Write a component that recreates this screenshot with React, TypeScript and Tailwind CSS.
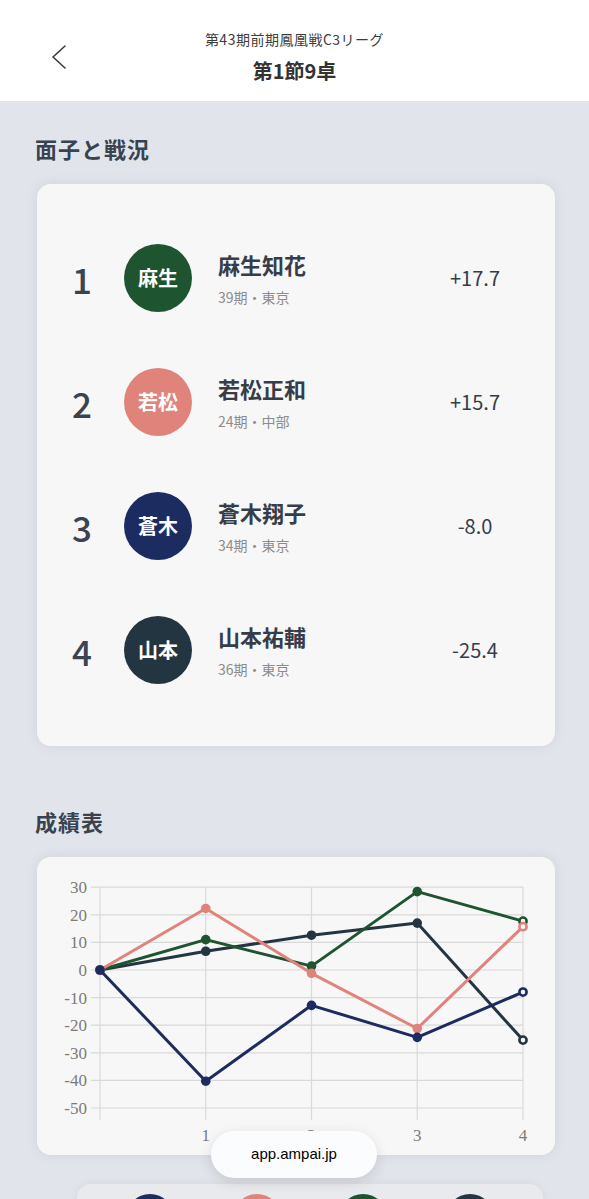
import React from "react";

const players = [
  { rank: 1, short: "麻生", name: "麻生知花", sub: "39期・東京", score: "+17.7", color: "bg-[#1f5430]" },
  { rank: 2, short: "若松", name: "若松正和", sub: "24期・中部", score: "+15.7", color: "bg-[#e0847b]" },
  { rank: 3, short: "蒼木", name: "蒼木翔子", sub: "34期・東京", score: "-8.0", color: "bg-[#1d2c60]" },
  { rank: 4, short: "山本", name: "山本祐輔", sub: "36期・東京", score: "-25.4", color: "bg-[#243542]" },
];

const series = [
  { color: "#243542", data: [0, 6.8, 12.6, 17, -25.4] },
  { color: "#1f5430", data: [0, 11, 1.4, 28.4, 17.7] },
  { color: "#e0847b", data: [0, 22.3, -1.2, -21.2, 15.7] },
  { color: "#1d2c60", data: [0, -40.3, -12.8, -24.4, -8.0] },
];

const X0 = 63;
const DX = 105.75;
const Y0 = 113;
const KY = 2.76;
const xp = (i: number) => X0 + i * DX;
const yp = (v: number) => Y0 - v * KY;

const serif = { fontFamily: "'Liberation Serif', 'Times New Roman', serif" };

function Chart() {
  const ticks = [30, 20, 10, 0, -10, -20, -30, -40, -50];
  return (
    <svg width="518" height="298" viewBox="0 0 518 298" className="block" style={serif}>
      {ticks.map((t) => (
        <line key={"h" + t} x1={54} x2={486} y1={yp(t)} y2={yp(t)} stroke="#d9d9d9" strokeWidth={1.2} />
      ))}
      {[0, 1, 2, 3, 4].map((i) => (
        <line key={"v" + i} x1={xp(i)} x2={xp(i)} y1={yp(30)} y2={263} stroke="#d9d9d9" strokeWidth={1.2} />
      ))}
      {ticks.map((t) => (
        <text key={"l" + t} x={50} y={yp(t) + 6} textAnchor="end" fontSize={17} fill="#7b7b7b" style={serif}>
          {t}
        </text>
      ))}
      {[1, 2, 3, 4].map((i) => (
        <text key={"x" + i} x={xp(i)} y={284} textAnchor="middle" fontSize={17} fill="#7b7b7b" style={serif}>
          {i}
        </text>
      ))}
      {series.map((s, si) => (
        <g key={si}>
          <polyline
            points={s.data.map((v, i) => `${xp(i)},${yp(v)}`).join(" ")}
            fill="none"
            stroke={s.color}
            strokeWidth={3}
            strokeLinejoin="round"
          />
          {s.data.map((v, i) =>
            i === 4 ? (
              <circle key={i} cx={xp(i)} cy={yp(v)} r={3.6} fill="#f7f7f7" stroke={s.color} strokeWidth={2.6} />
            ) : (
              <circle key={i} cx={xp(i)} cy={yp(v)} r={4.8} fill={s.color} />
            )
          )}
        </g>
      ))}
    </svg>
  );
}

export default function App() {
  return (
    <div
      className="relative h-[1199px] w-[589px] overflow-hidden bg-[#e1e5eb] text-[#363d49]"
      style={{ fontFamily: "'Noto Sans CJK JP', 'Noto Sans', sans-serif" }}
    >
      {/* header */}
      <div className="relative flex h-[101px] flex-col items-center bg-white pt-[28px]">
        <svg className="absolute left-[50px] top-[44px]" width="18" height="26" viewBox="0 0 18 26">
          <path d="M15 2 L3 13 L15 24" fill="none" stroke="#3a3a3a" strokeWidth="1.6" strokeLinecap="round" strokeLinejoin="round" />
        </svg>
        <div className="text-[14px] leading-[22px] tracking-[0.5px] text-[#3c3c3c]">第43期前期鳳凰戦C3リーグ</div>
        <div className="mt-[9px] text-[20px] font-bold leading-[24px] text-[#333333]">第1節9卓</div>
      </div>

      <div className="pl-[37px] pr-[34px] pt-[31px]">
        <div className="-ml-[2px] text-[22px] font-bold leading-[32px] tracking-[1px] text-[#3a4250]">面子と戦況</div>

        <div className="mt-[20px] rounded-[14px] bg-[#f7f7f7] pb-[34px] pt-[32px] shadow-[0_0_14px_rgba(0,0,0,0.07)]">
          {players.map((p) => (
            <div key={p.rank} className="flex h-[124px] items-center pl-[30px] pr-[30px]">
              <div className="w-[30px] text-center text-[35px] font-medium leading-none text-[#3b4350]">{p.rank}</div>
              <div
                className={`ml-[27px] flex h-[68px] w-[68px] shrink-0 items-center justify-center rounded-full ${p.color} text-[20px] font-semibold text-white`}
              >
                {p.short}
              </div>
              <div className="ml-[26px] flex flex-1 flex-col">
                <div className="text-[22px] font-bold leading-[30px] text-[#363d49]">{p.name}</div>
                <div className="mt-[8px] text-[14px] leading-[20px] text-[#8c8c8c]">{p.sub}</div>
              </div>
              <div className="w-[100px] text-center text-[20px] leading-none text-[#363d49]">{p.score}</div>
            </div>
          ))}
        </div>

        <div className="-ml-[2px] mt-[59px] text-[22px] font-bold leading-[32px] tracking-[1px] text-[#3a4250]">成績表</div>

        <div className="mt-[20px] h-[298px] rounded-[14px] bg-[#f7f7f7] shadow-[0_0_14px_rgba(0,0,0,0.07)]">
          <Chart />
        </div>

        <div className="ml-[40px] mt-[29px] flex h-[60px] w-[466px] justify-around rounded-t-[14px] bg-[#e8eaed] px-[20px] pt-[10px] shadow-[0_0_10px_rgba(0,0,0,0.06)]">
          <div className="h-[48px] w-[48px] rounded-full bg-[#1d2c60]" />
          <div className="h-[48px] w-[48px] rounded-full bg-[#e0847b]" />
          <div className="h-[48px] w-[48px] rounded-full bg-[#1f5430]" />
          <div className="h-[48px] w-[48px] rounded-full bg-[#243542]" />
        </div>
      </div>

      {/* url pill */}
      <div
        className="absolute left-[211px] top-[1131px] flex h-[47px] w-[166px] items-center justify-center rounded-full bg-[#fbfcfd] text-[15px] text-black shadow-[0_4px_14px_rgba(0,0,0,0.12)]"
        style={{ fontFamily: "'Liberation Sans', Arial, sans-serif" }}
      >
        app.ampai.jp
      </div>
    </div>
  );
}
